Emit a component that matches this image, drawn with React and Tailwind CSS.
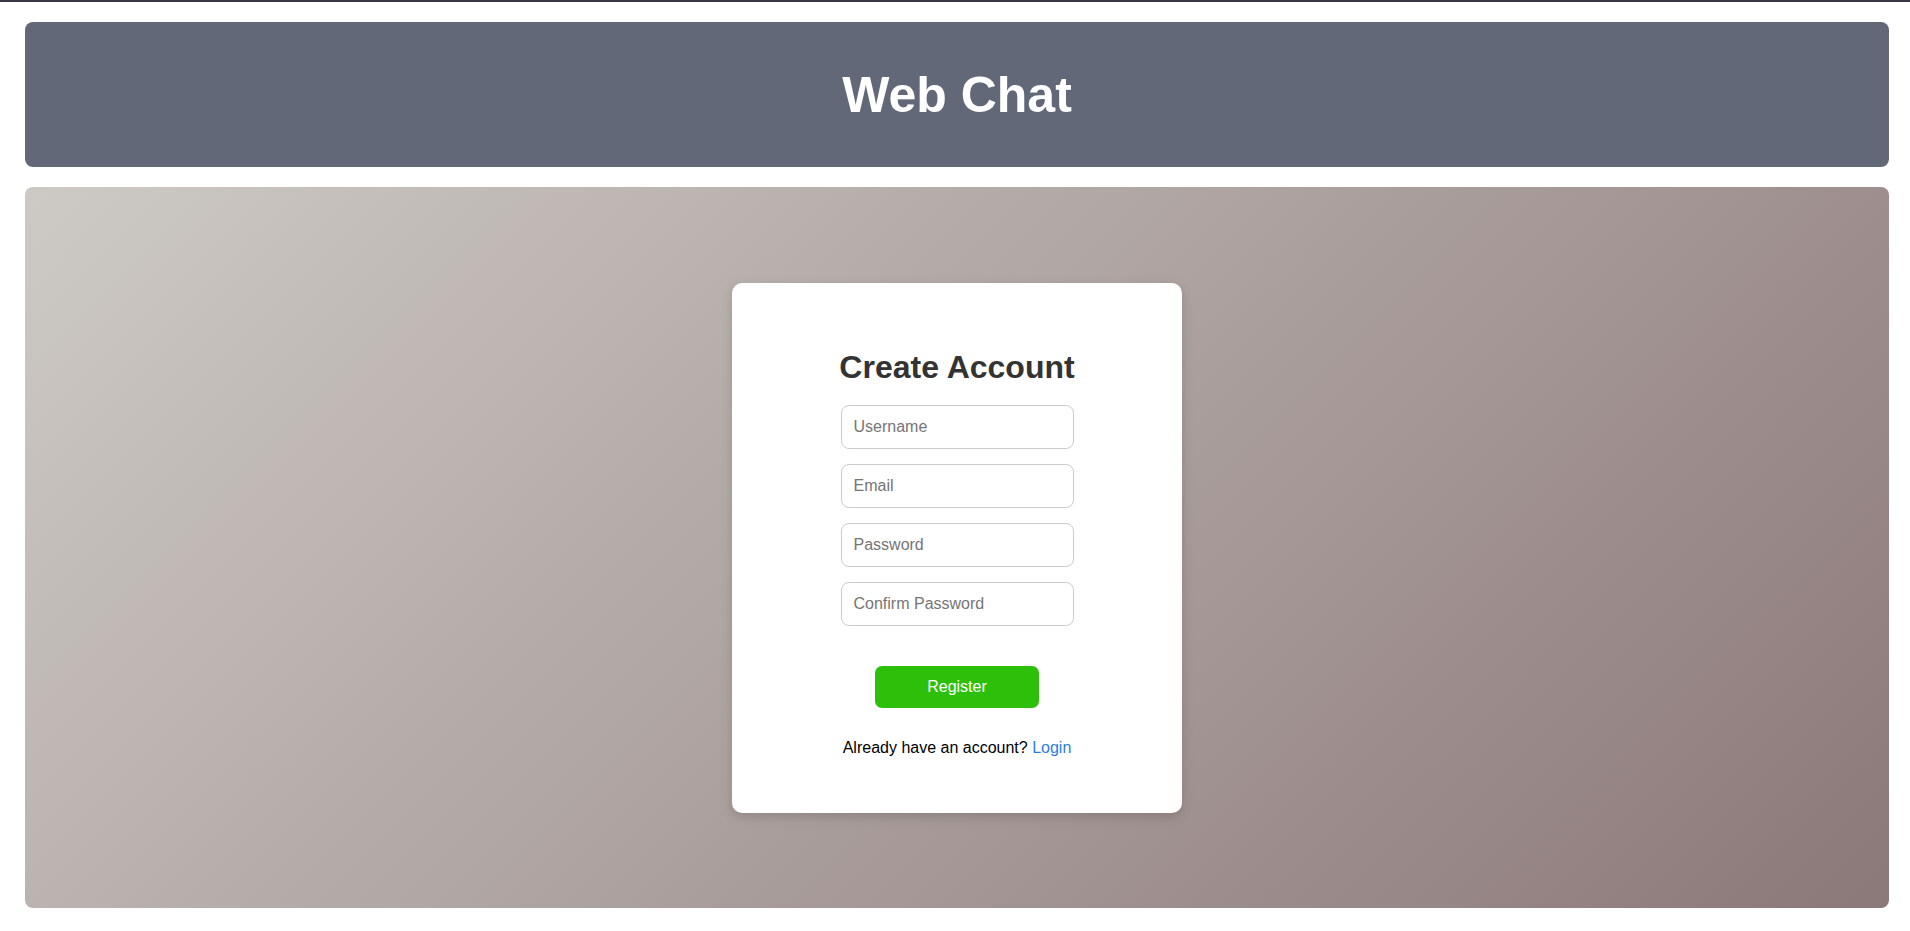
import React from 'react';

const App = () => {
  const fields = [
    { name: 'username', type: 'text', placeholder: 'Username' },
    { name: 'email', type: 'email', placeholder: 'Email' },
    { name: 'password', type: 'password', placeholder: 'Password' },
    { name: 'confirm', type: 'password', placeholder: 'Confirm Password' }
  ];

  return (
    <div className="min-h-[931px] bg-white border-t-2 border-[#3b3646] font-['Liberation_Sans',Arial,sans-serif] pl-[25px] pr-[21px] pt-[20px]">
      {/* Header */}
      <div className="h-[145px] bg-[#626877] rounded-lg flex items-center justify-center">
        <h1 className="text-[50px] font-bold text-white leading-none">Web Chat</h1>
      </div>

      {/* Main */}
      <div className="mt-[20px] h-[721px] rounded-lg bg-[linear-gradient(135deg,#cdcac5,#8b7878)] flex items-center justify-center">
        <div className="w-[450px] bg-white rounded-[10px] shadow-[0_4px_12px_rgba(0,0,0,0.15)] px-[40px] pt-[40px] pb-[40px] flex flex-col items-center">
          <h2 className="mt-[26px] mb-[19px] text-[32px] font-bold text-[#333333] leading-[37px]">Create Account</h2>
          <div className="flex flex-col gap-[15px]">
            {fields.map((f) => (
              <input
                key={f.name}
                type={f.type}
                placeholder={f.placeholder}
                className="w-[233px] h-[44px] px-[12px] border border-[#cccccc] rounded-lg text-[16px] text-[#333] placeholder:text-[#757575] outline-none bg-white"
              />
            ))}
          </div>
          <button className="mt-[40px] w-[164px] h-[42px] rounded-[7px] bg-[#2dc00b] text-white text-[16px]">
            Register
          </button>
          <p className="mt-[31px] mb-[16px] text-[16px] leading-[18px] text-black">
            Already have an account? <a href="#" className="text-[#2a7de1]">Login</a>
          </p>
        </div>
      </div>
    </div>
  );
};

export default App;
